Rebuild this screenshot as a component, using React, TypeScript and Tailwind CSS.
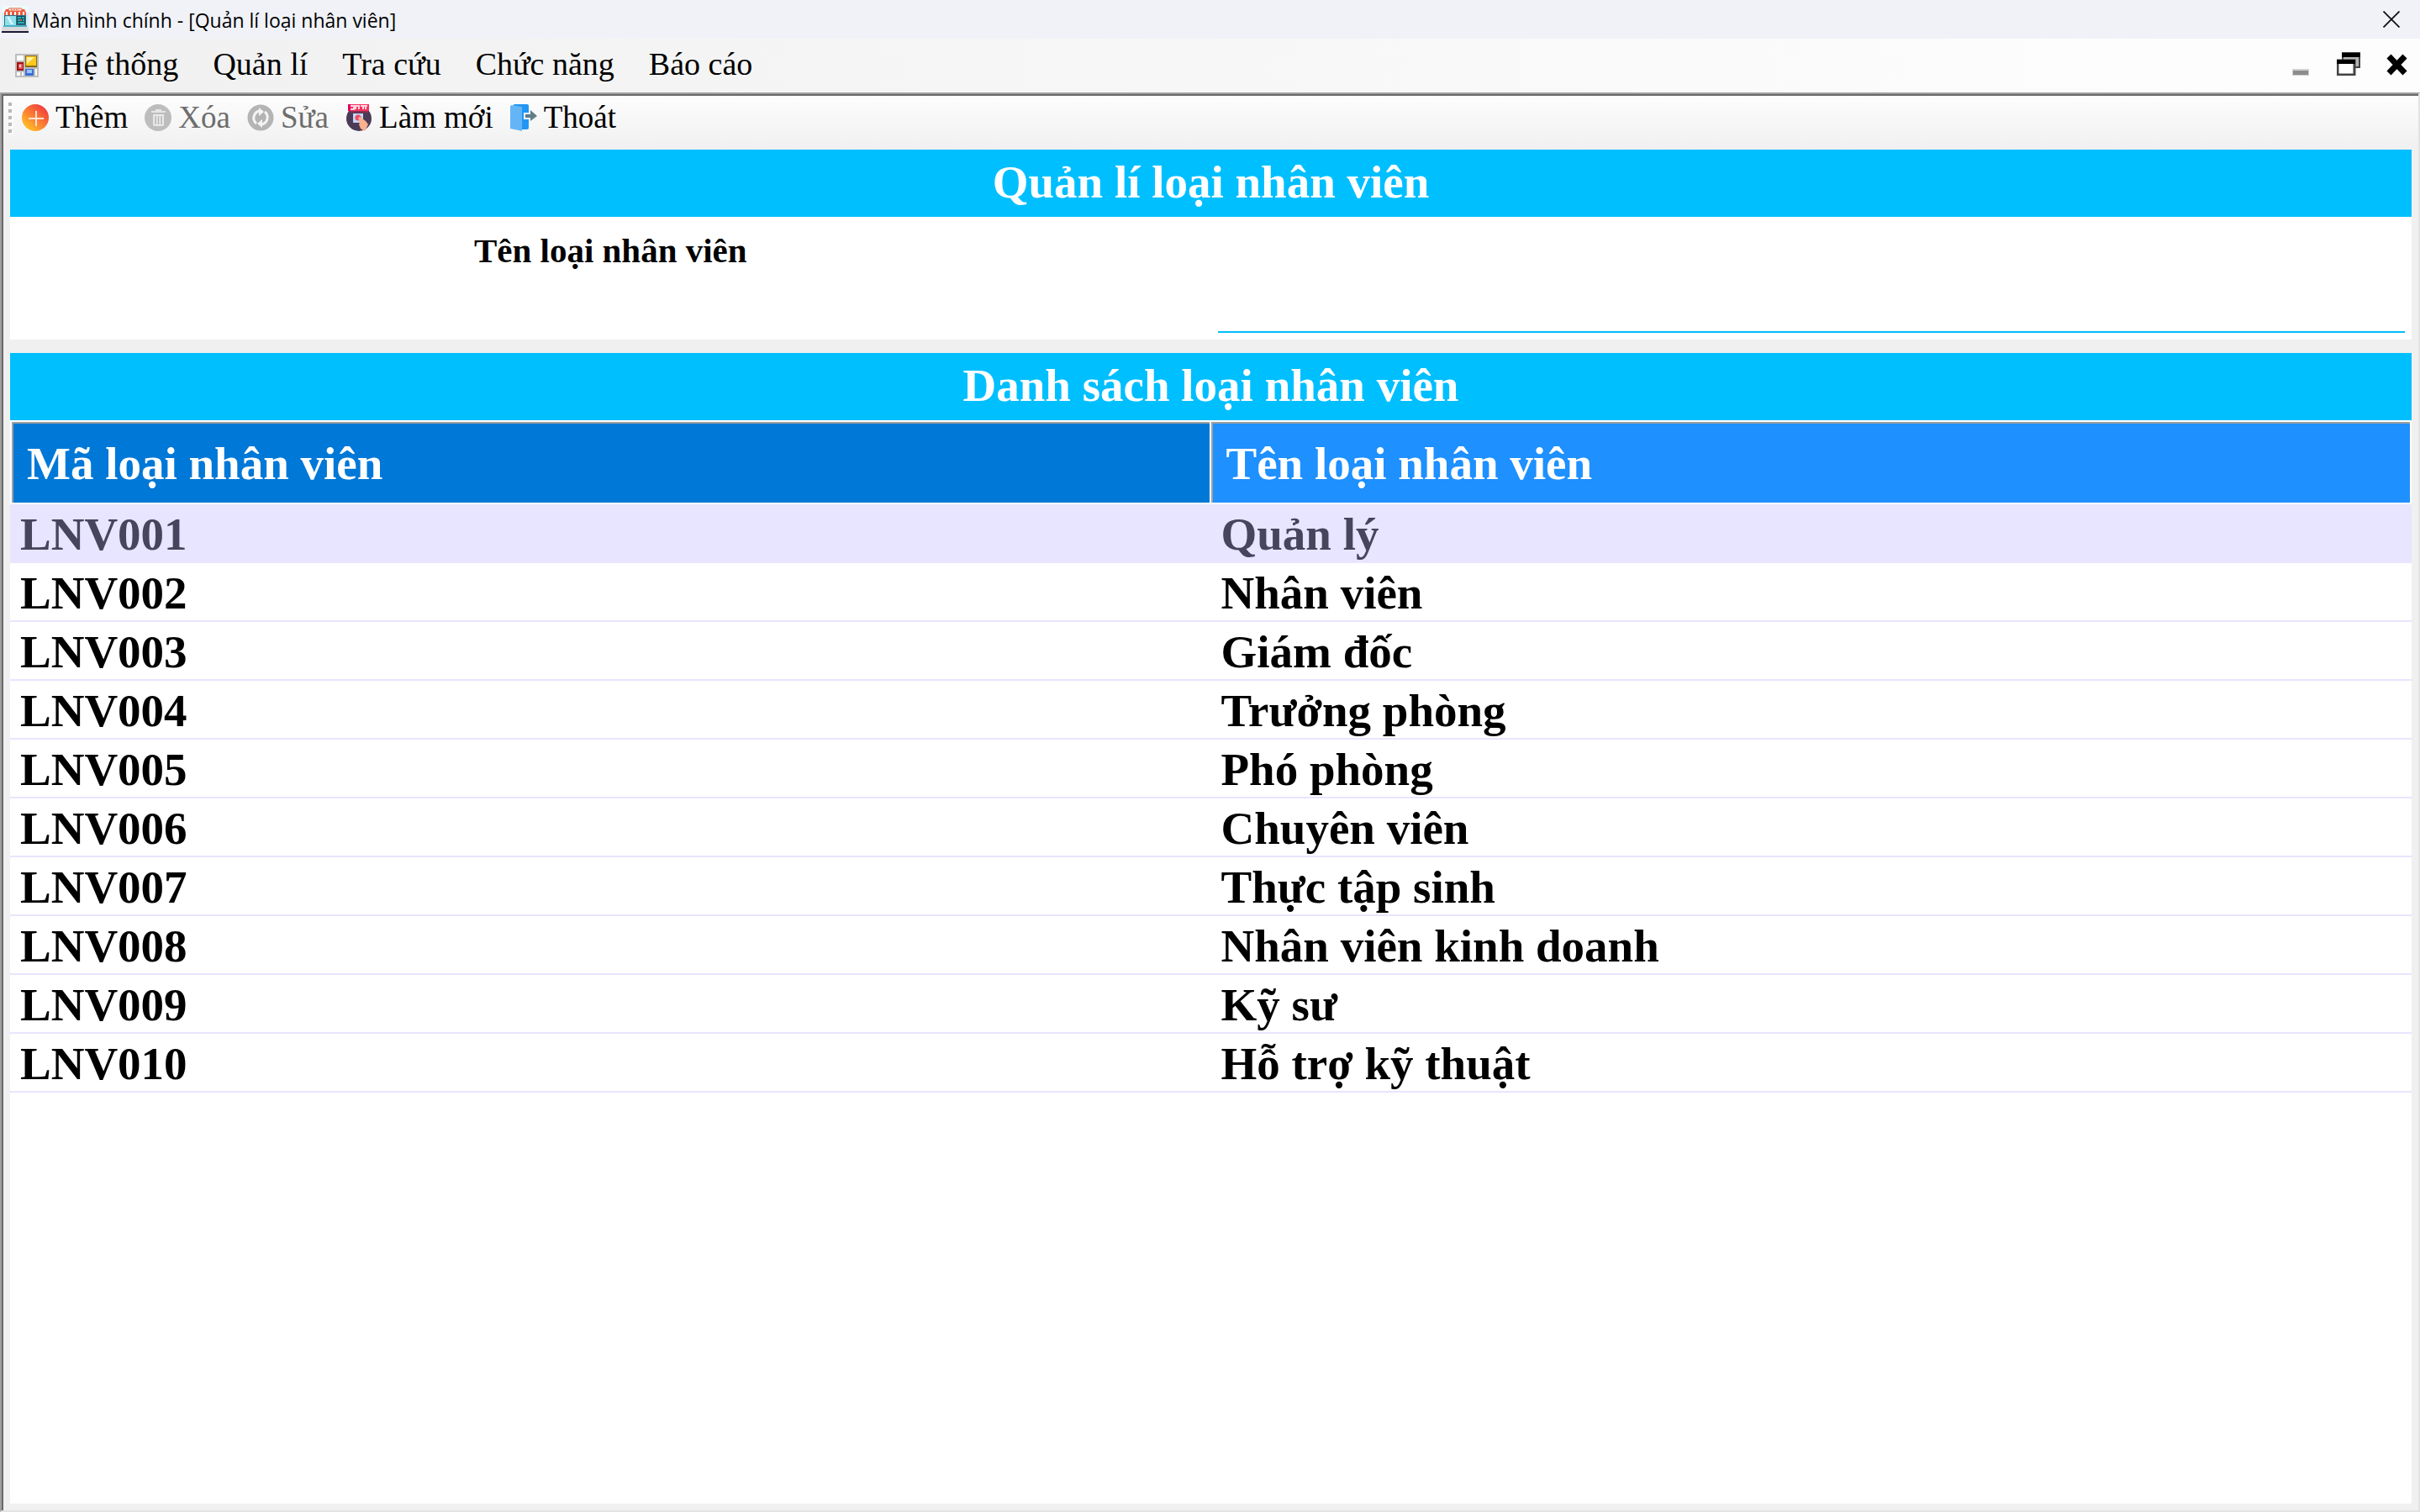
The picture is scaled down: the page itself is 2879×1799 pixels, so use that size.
import type { ReactNode } from "react";

const menus = ["Hệ thống", "Quản lí", "Tra cứu", "Chức năng", "Báo cáo"];

const rows = [
  ["LNV001", "Quản lý"],
  ["LNV002", "Nhân viên"],
  ["LNV003", "Giám đốc"],
  ["LNV004", "Trưởng phòng"],
  ["LNV005", "Phó phòng"],
  ["LNV006", "Chuyên viên"],
  ["LNV007", "Thực tập sinh"],
  ["LNV008", "Nhân viên kinh doanh"],
  ["LNV009", "Kỹ sư"],
  ["LNV010", "Hỗ trợ kỹ thuật"],
];

function StoreIcon() {
  return (
    <svg viewBox="0 0 32 32" className="size-8 shrink-0" aria-hidden="true">
      <rect width="32" height="32" fill="#d3f1f8" />
      <rect width="32" height="8" fill="#eefafc" />
      <rect y="25" width="32" height="5" fill="#d9d9dc" />
      <rect y="30" width="32" height="2" fill="#1c1833" />
      <rect x="3" y="10" width="26" height="14" fill="#3f6b7d" />
      <rect x="4" y="12" width="13" height="11" fill="#8fe0ee" />
      <path d="M6 13h3l5 9h-3z" fill="#d9f7fb" />
      <rect x="18" y="12" width="10" height="10" fill="#0f4f5c" />
      <path d="M19 14h4M24 14h3M19 17h3M25 17h2M19 20h8" stroke="#35d0d6" strokeWidth="1.5" />
      <rect x="22" y="16" width="2" height="2" fill="#f0563a" />
      <rect x="2" y="23" width="28" height="2" fill="#49b2c8" />
      <path d="M5 4h22l2 4v3H3V8z" fill="#f15a3c" />
      <path d="M6 7v4M11 7v4M16 7v4M21 7v4M26 7v4" stroke="#fff" strokeWidth="2" />
      <rect x="8" y="3" width="16" height="3" rx="1" fill="#fff" stroke="#e8502f" />
      <path d="M11 4.500h10" stroke="#f0845f" strokeDasharray="2 1" />
    </svg>
  );
}

function FormIcon() {
  return (
    <svg viewBox="0 0 28 28" className="size-7 shrink-0" aria-hidden="true">
      <rect width="28" height="28" fill="#bdbdbd" />
      <path d="M2 2h8v6H2zM2 22h4v4H2zM8 22h2v4H8zM24 18h2v8h-2z" fill="#fff" />
      <rect x="2" y="10" width="8" height="10" fill="#a51212" />
      <rect x="4" y="12" width="5" height="6" fill="#e85a5a" />
      <rect x="5" y="13" width="2" height="3" fill="#ffd0d0" />
      <rect x="12" y="2" width="14" height="14" fill="#8a6a10" />
      <rect x="13" y="3" width="12" height="11" fill="#fbc81c" />
      <path d="M14 4h9l-9 8z" fill="#fff0a8" />
      <rect x="12" y="18" width="10" height="8" fill="#3a6fd8" />
      <rect x="14" y="19" width="6" height="4" fill="#9cc4fb" />
    </svg>
  );
}

function AddIcon() {
  return (
    <svg viewBox="0 0 32 32" className="size-8 shrink-0" aria-hidden="true">
      <defs>
        <linearGradient id="add-fill" x1="0.150" y1="0.900" x2="0.850" y2="0.100">
          <stop offset="0" stopColor="#ffc226" />
          <stop offset="0.500" stopColor="#fb7c34" />
          <stop offset="1" stopColor="#f03c3e" />
        </linearGradient>
      </defs>
      <circle cx="16" cy="16" r="16" fill="url(#add-fill)" />
      <path d="M17 8v18M8 17h18" stroke="#ffe3d2" strokeWidth="2" />
    </svg>
  );
}

function TrashIcon() {
  return (
    <svg viewBox="0 0 32 32" className="size-8 shrink-0" aria-hidden="true">
      <circle cx="16" cy="16" r="16" fill="#bdbdbd" />
      <path d="M8 9h17M13 7h7" stroke="#e6e6e6" strokeWidth="2" />
      <path d="M10 12h13v12q0 2-2 2h-9q-2 0-2-2z" fill="#e9e9e9" />
      <path d="M13 14v10M16.500 14v10M20 14v10" stroke="#b6b6b6" strokeWidth="1.500" />
    </svg>
  );
}

function EditIcon() {
  return (
    <svg viewBox="0 0 32 32" className="size-8 shrink-0" aria-hidden="true">
      <circle cx="16" cy="16" r="15.500" fill="#b4b4b4" />
      <path d="M11 23a8.500 8.500 0 0 1 4-15M21 9a8.500 8.500 0 0 1-4 15" fill="none" stroke="#f4f4f4" strokeWidth="3" />
      <path d="M14 4l6 5-6 5zM18 18l-6 5 6 5z" fill="#f4f4f4" />
    </svg>
  );
}

function ResetIcon() {
  return (
    <svg viewBox="0 0 32 32" className="size-8 shrink-0" aria-hidden="true">
      <circle cx="16" cy="17" r="15" fill="#4b3b57" />
      <path d="M5 8h22v2H5z" fill="#8b2f54" />
      <rect x="3" y="0" width="25" height="8" fill="#f5325c" />
      <rect x="3" y="0" width="3" height="8" fill="#e00060" />
      <path d="M6 2h4v4H6M12 6V2h4v4M18 2h3v4M22 2h4M24 2v4" fill="none" stroke="#ffd5e0" strokeWidth="2" />
      <rect x="9" y="11" width="12" height="11" fill="#c6d7f5" />
      <circle cx="15" cy="16" r="3.500" fill="#ef4a6b" />
      <path d="M15 16l2-1 7 5 3 4-4 8-5-3-2-5 1-2z" fill="#fcb18f" />
    </svg>
  );
}

function ExitIcon() {
  return (
    <svg viewBox="0 0 32 32" className="size-8 shrink-0" aria-hidden="true">
      <path d="M4 0h16q2 0 2 2v26q0 2-2 2H8z" fill="#2196f3" />
      <path d="M0 2l2-1 12 2v29l-4-1L0 29z" fill="#64b5f6" />
      <path d="M16 10h7v8h-7z" fill="#eaf4fc" />
      <path d="M18 12h6V7l8 7-8 6v-4h-6z" fill="#607d8b" />
    </svg>
  );
}

function ToolButton({ icon, children, disabled }: { icon: ReactNode; children: ReactNode; disabled?: boolean }) {
  return (
    <button type="button" disabled={disabled} className="flex items-center gap-2 disabled:text-[#6d6d6d]">
      {icon}
      {children}
    </button>
  );
}

function SectionTitle({ children }: { children: ReactNode }) {
  return (
    <h2 className="h-20 shrink-0 bg-[#00bfff] text-center text-[55px] leading-[78px] font-bold text-white">{children}</h2>
  );
}

export default function App() {
  return (
    <div className="flex h-screen flex-col bg-[#f0f0f0] font-['Liberation_Serif',serif] text-black">
      <header className="flex h-[46px] shrink-0 items-center gap-1 bg-[#f0f2f8] pl-0.5 font-['Open_Sans',sans-serif]">
        <StoreIcon />
        <h1 className="pt-0.5 text-[23px] leading-8">Màn hình chính - [Quản lí loại nhân viên]</h1>
        <button type="button" aria-label="Đóng" className="mr-6 ml-auto">
          <svg viewBox="0 0 20 20" className="size-5">
            <path d="M0.500 0.500l19 19M19.500 0.500l-19 19" stroke="#111" strokeWidth="1.800" />
          </svg>
        </button>
      </header>

      <nav className="flex h-16 shrink-0 items-center bg-linear-to-r from-[#f0f0f0] to-[#fdfdfd] to-90% pl-[18px]">
        <FormIcon />
        <div className="flex gap-[41px] pb-1 pl-[26px] text-[38px] leading-10">
          {menus.map((m) => (
            <button type="button" key={m}>{m}</button>
          ))}
        </div>
        <div className="mr-[13px] ml-auto flex items-center gap-[30px] pb-1">
          <button type="button" aria-label="Thu nhỏ">
            <svg viewBox="0 0 24 28" className="h-7 w-6">
              <rect x="1" y="20" width="20" height="8" fill="#d0d0d0" />
              <rect x="2" y="22" width="18" height="5" fill="#8c8c8c" />
            </svg>
          </button>
          <button type="button" aria-label="Khôi phục">
            <svg viewBox="0 0 28 28" className="size-7">
              <rect x="7" y="1" width="20" height="17" fill="#b5b5b5" stroke="#444" strokeWidth="2" />
              <rect x="6" y="1" width="22" height="5" fill="#000" />
              <rect x="1" y="10" width="20" height="17" fill="#fff" stroke="#444" strokeWidth="3" />
              <rect x="0" y="9" width="22" height="5" fill="#000" />
            </svg>
          </button>
          <button type="button" aria-label="Đóng cửa sổ con">
            <svg viewBox="0 0 28 28" className="size-7">
              <path d="M4 5l19 20M23 5L4 25" stroke="#000" strokeWidth="7" />
            </svg>
          </button>
        </div>
      </nav>

      <div className="flex min-h-0 flex-1 flex-col border-2 border-t-[#a0a0a0] border-r-[#e3e3e3] border-b-[#e3e3e3] border-l-[#a0a0a0]">
        <div className="flex min-h-0 flex-1 flex-col border-t-2 border-l-2 border-[#696969]">
          <div role="toolbar" className="flex h-16 shrink-0 items-start bg-linear-to-b from-[#fdfdfd] to-[#f0f0f0] pt-1.5 pl-1.5 text-[37px] leading-10">
            <svg viewBox="0 0 6 38" className="mt-0.5 mr-2.5 h-[38px] w-1.5" aria-hidden="true">
              {[0, 8, 16, 24, 32].map((y) => (
                <g key={y}>
                  <rect x="2" y={y + 2} width="4" height="4" fill="#fff" />
                  <rect x="0" y={y} width="4" height="4" fill="#b8b8b8" />
                </g>
              ))}
            </svg>
            <div className="flex gap-5">
              <ToolButton icon={<AddIcon />}>Thêm</ToolButton>
              <ToolButton icon={<TrashIcon />} disabled>Xóa</ToolButton>
              <ToolButton icon={<EditIcon />} disabled>Sửa</ToolButton>
              <ToolButton icon={<ResetIcon />}>Làm mới</ToolButton>
              <ToolButton icon={<ExitIcon />}>Thoát</ToolButton>
            </div>
          </div>

          <main className="flex min-h-0 flex-1 flex-col gap-4 px-2 pb-2">
            <section className="flex shrink-0 flex-col bg-white">
              <SectionTitle>Quản lí loại nhân viên</SectionTitle>
              <div className="grid h-[146px] grid-cols-2 px-2 pt-2 pb-2">
                <label htmlFor="type-name" className="pt-2.5 pr-2 text-center text-[41px] leading-[44px] font-bold">
                  Tên loại nhân viên
                </label>
                <input
                  id="type-name"
                  className="ml-2 border-b-2 border-[#00bfff] bg-transparent px-2 text-[41px] font-bold outline-none"
                />
              </div>
            </section>

            <section className="flex min-h-0 flex-1 flex-col bg-white">
              <SectionTitle>Danh sách loại nhân viên</SectionTitle>
              <table className="w-full table-fixed border-separate border-spacing-0 text-left text-[55px] font-bold">
                <thead>
                  <tr className="text-white">
                    <th className="border-2 border-white p-0">
                      <div className="h-24 border-t-2 border-l-2 border-[#a0a0a0] bg-[#0078d7] pl-4 leading-[96px]">Mã loại nhân viên</div>
                    </th>
                    <th className="border-2 border-l-0 border-white p-0">
                      <div className="h-24 border-t-2 border-l-2 border-[#a0a0a0] bg-[#1e90ff] pl-4 leading-[96px]">Tên loại nhân viên</div>
                    </th>
                  </tr>
                </thead>
                <tbody>
                  {rows.map(([id, name], i) => (
                    <tr key={id} className={i === 0 ? "bg-[#e7e5ff] text-[#47455e]" : ""}>
                      <td className="h-[70px] border-b-2 border-[#e7e5ff] p-0 pt-1 pl-3 leading-[64px]">{id}</td>
                      <td className="h-[70px] border-b-2 border-[#e7e5ff] p-0 pt-1 pl-3 leading-[64px]">{name}</td>
                    </tr>
                  ))}
                </tbody>
              </table>
            </section>
          </main>
        </div>
      </div>
    </div>
  );
}
